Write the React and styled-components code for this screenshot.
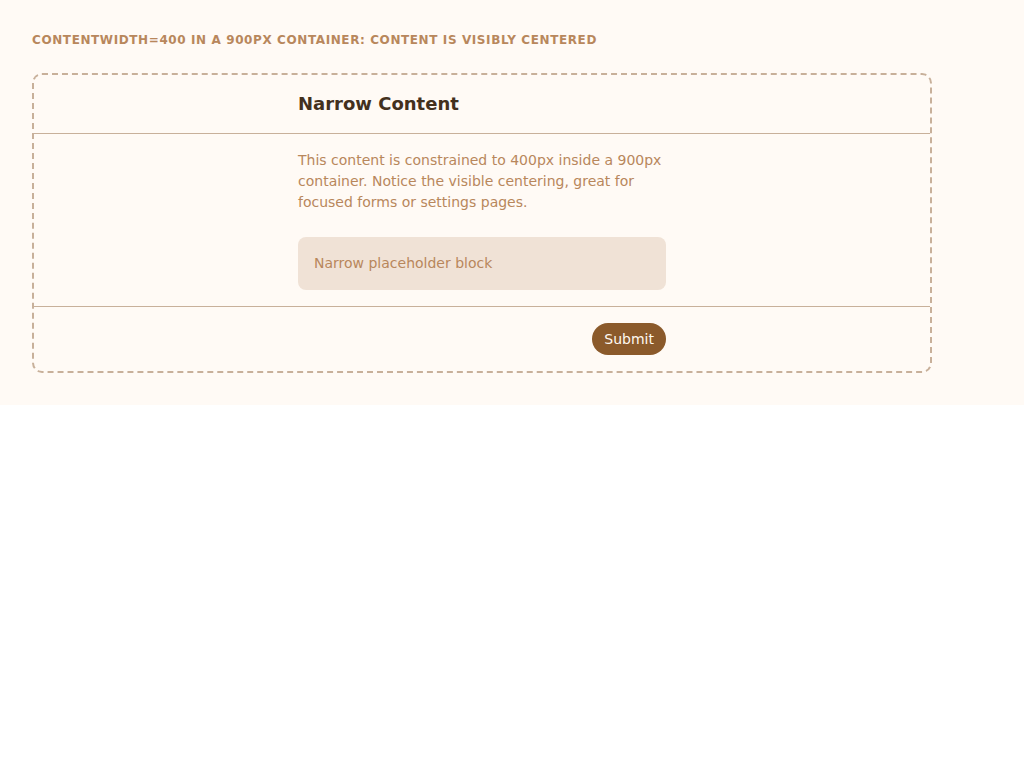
import React from "react";
import styled, { createGlobalStyle } from "styled-components";

const GlobalStyle = createGlobalStyle`
  body {
    margin: 0;
    font-family: "DejaVu Sans", sans-serif;
    background: #ffffff;
  }
`;

const Page = styled.div`
  background: #fffaf5;
  padding: 32px;
`;

const Caption = styled.div`
  font-size: 12px;
  font-weight: bold;
  text-transform: uppercase;
  letter-spacing: 0.05em;
  color: #b8875c;
  line-height: 17px;
  margin-bottom: 24px;
`;

const Frame = styled.div`
  width: 900px;
  box-sizing: border-box;
  border: 2px dashed #c8b09a;
  border-radius: 10px;
`;

const Section = styled.div`
  border-top: ${(p) => (p.$divided ? "1px solid #c8b09a" : "none")};
  padding: ${(p) => p.$pad || "16px 0"};
`;

const Narrow = styled.div`
  width: 400px;
  box-sizing: border-box;
  margin: 0 auto;
  padding: 0 16px;
  display: ${(p) => (p.$end ? "flex" : "block")};
  justify-content: flex-end;
`;

const Title = styled.h2`
  margin: 0;
  font-size: 18px;
  line-height: 22px;
  font-weight: bold;
  color: #43301d;
`;

const Text = styled.p`
  margin: 0 0 24px;
  font-size: 14px;
  line-height: 21px;
  color: #b8875c;
`;

const Placeholder = styled.div`
  background: #f0e2d6;
  border-radius: 8px;
  padding: 16px;
  font-size: 14px;
  line-height: 21px;
  color: #b8875c;
`;

const Button = styled.button`
  font-family: "DejaVu Sans", sans-serif;
  font-size: 14px;
  height: 32px;
  padding: 0 12px;
  border: none;
  border-radius: 16px;
  background: #8b5a2b;
  color: #fff8f0;
`;

export default function App() {
  return (
    <>
      <GlobalStyle />
      <Page>
        <Caption>contentWidth=400 in a 900px container: content is visibly centered</Caption>
        <Frame>
          <Section $pad="18px 0">
            <Narrow>
              <Title>Narrow Content</Title>
            </Narrow>
          </Section>
          <Section $divided>
            <Narrow>
              <Text>
                This content is constrained to 400px inside a 900px container. Notice the visible
                centering, great for focused forms or settings pages.
              </Text>
              <Placeholder>Narrow placeholder block</Placeholder>
            </Narrow>
          </Section>
          <Section $divided>
            <Narrow $end>
              <Button>Submit</Button>
            </Narrow>
          </Section>
        </Frame>
      </Page>
    </>
  );
}
